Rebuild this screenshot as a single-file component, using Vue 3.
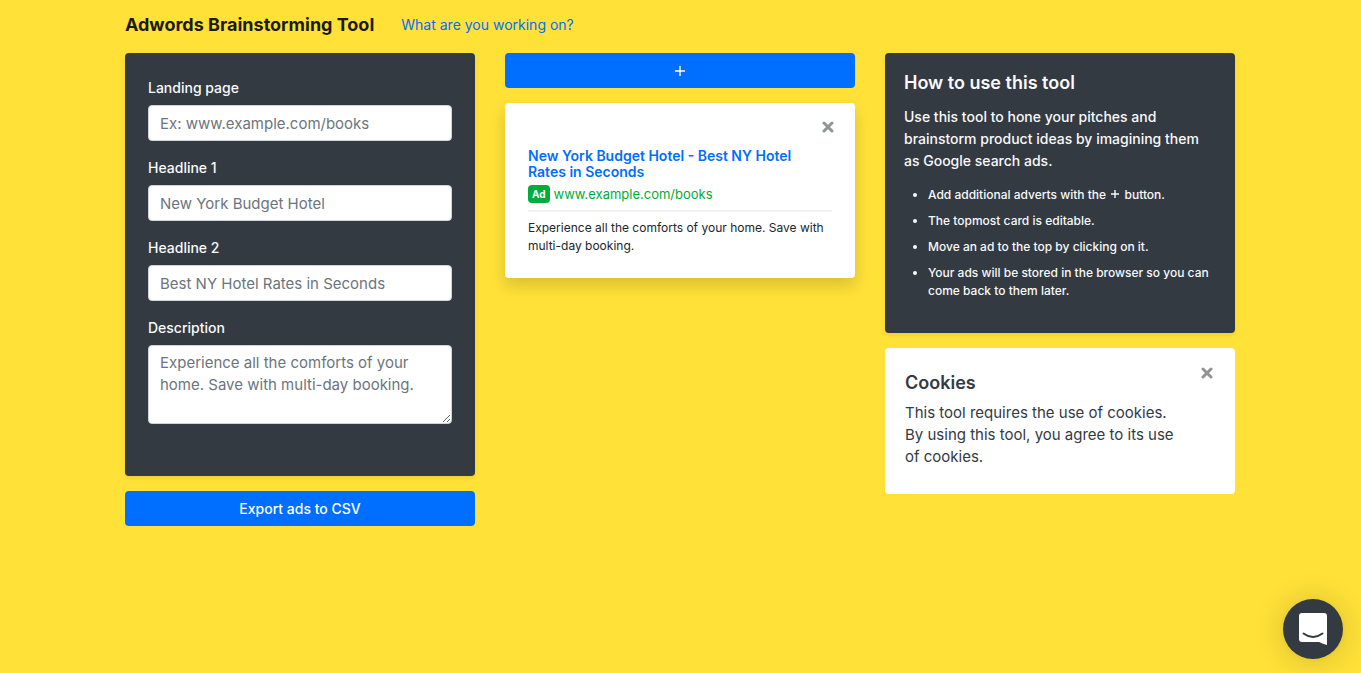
<script setup>
import { ref } from 'vue'

const fields = [
  { id: 'headline1', label: 'Headline 1', placeholder: 'New York Budget Hotel' },
  { id: 'headline2', label: 'Headline 2', placeholder: 'Best NY Hotel Rates in Seconds' },
]
const form = ref({ landing: '', headline1: '', headline2: '', description: '' })
const showCookies = ref(true)
</script>

<template>
  <div class="page">
    <header class="top">
      <h1>Adwords Brainstorming Tool</h1>
      <a href="#">What are you working on?</a>
    </header>

    <main class="columns">
      <section class="column">
        <form class="panel editor" @submit.prevent>
          <div class="field">
            <label for="landing">Landing page</label>
            <input id="landing" v-model="form.landing" type="text" placeholder="Ex: www.example.com/books" />
          </div>
          <div v-for="f in fields" :key="f.id" class="field">
            <label :for="f.id">{{ f.label }}</label>
            <input :id="f.id" v-model="form[f.id]" type="text" :placeholder="f.placeholder" />
          </div>
          <div class="field">
            <label for="description">Description</label>
            <textarea
              id="description"
              v-model="form.description"
              placeholder="Experience all the comforts of your home. Save with multi-day booking."
            ></textarea>
          </div>
        </form>
        <button type="button" class="primary">Export ads to CSV</button>
      </section>

      <section class="column">
        <button type="button" class="primary" aria-label="Add advert">
          <svg class="plus" viewBox="0 0 12 12" aria-hidden="true"><path d="M6 1v10M1 6h10" /></svg>
        </button>
        <article class="ad">
          <button type="button" class="close" aria-label="Remove advert">
            <svg viewBox="0 0 12 12" aria-hidden="true"><path d="M2 2l8 8M10 2l-8 8" /></svg>
          </button>
          <h2>New York Budget Hotel - Best NY Hotel Rates in Seconds</h2>
          <div class="url"><span class="badge">Ad</span><span>www.example.com/books</span></div>
          <p>Experience all the comforts of your home. Save with multi-day booking.</p>
        </article>
      </section>

      <aside class="column">
        <section class="panel help">
          <h2>How to use this tool</h2>
          <p>Use this tool to hone your pitches and brainstorm product ideas by imagining them as Google search ads.</p>
          <ul>
            <li>
              Add additional adverts with the
              <svg class="plus small" viewBox="0 0 12 12" role="img" aria-label="plus"><path d="M6 2v8M2 6h8" /></svg>
              button.
            </li>
            <li>The topmost card is editable.</li>
            <li>Move an ad to the top by clicking on it.</li>
            <li>Your ads will be stored in the browser so you can come back to them later.</li>
          </ul>
        </section>
        <section v-if="showCookies" class="cookies">
          <div>
            <h2>Cookies</h2>
            <p>This tool requires the use of cookies. By using this tool, you agree to its use of cookies.</p>
          </div>
          <button type="button" class="close" aria-label="Dismiss" @click="showCookies = false">
            <svg viewBox="0 0 12 12" aria-hidden="true"><path d="M2 2l8 8M10 2l-8 8" /></svg>
          </button>
        </section>
      </aside>
    </main>

    <button type="button" class="chat" aria-label="Open chat">
      <svg viewBox="0 0 28 32" aria-hidden="true">
        <path class="bubble" d="M3 0h22q3 0 3 3v29q-4-1-8-3H3q-3 0-3-3V3q0-3 3-3z" />
        <path class="smile" d="M4.500 20.500q9.500 7 19 0" />
      </svg>
    </button>
  </div>
</template>

<style>
body {
  margin: 0;
  background: #ffe138;
}
</style>

<style scoped>
* {
  box-sizing: border-box;
}
.page {
  max-width: 1141px;
  margin: 0 auto;
  padding: 0 16px 30px 15px;
  font-family: Inter, "Liberation Sans", sans-serif;
  font-size: 14px;
  line-height: 22px;
  color: #212529;
}
h1, h2, p, ul {
  margin: 0;
}
button, input, textarea {
  font: inherit;
}
.top {
  display: flex;
  align-items: center;
  gap: 27px;
  padding: 12px 0 15px;
}
h1 {
  font-size: 18px;
  line-height: 26px;
  font-weight: 700;
  color: #1c1a08;
}
.top a {
  color: #006eff;
  text-decoration: none;
}
.columns {
  display: grid;
  grid-template-columns: repeat(auto-fit, minmax(300px, 1fr));
  gap: 30px;
  align-items: start;
}
.column {
  display: flex;
  flex-direction: column;
  gap: 15px;
}
.panel {
  border-radius: 4px;
  background: #343a42;
  color: #f8f9fa;
  font-weight: 500;
  box-shadow: 0 2px 4px rgba(0, 0, 0, 0.08);
}
.editor {
  display: flex;
  flex-direction: column;
  gap: 16px;
  padding: 24px 23px 52px;
}
.field {
  display: flex;
  flex-direction: column;
  gap: 6px;
}
input, textarea {
  display: block;
  width: 100%;
  height: 36px;
  margin: 0;
  padding: 6px 11px;
  border: 1px solid #ced4da;
  border-radius: 4px;
  background: #fff;
  color: #495057;
  font-size: 15px;
  font-weight: 400;
}
textarea {
  height: 79px;
  resize: vertical;
}
input::placeholder, textarea::placeholder {
  color: #6c757d;
  opacity: 1;
}
.primary {
  display: flex;
  align-items: center;
  justify-content: center;
  width: 100%;
  height: 35px;
  padding: 0;
  border: 0;
  border-radius: 4px;
  background: #006eff;
  color: #fff;
  font-weight: 500;
  cursor: pointer;
}
.plus {
  width: 12px;
  height: 12px;
  fill: none;
  stroke: currentColor;
  stroke-width: 1.4;
}
.plus.small {
  vertical-align: -1px;
}
.ad {
  display: flex;
  flex-direction: column;
  padding: 16px 23px 23px;
  border-radius: 4px;
  background: #fff;
  box-shadow: 0 8px 16px rgba(0, 0, 0, 0.15);
}
.close {
  align-self: flex-end;
  display: flex;
  align-items: center;
  justify-content: center;
  width: 16px;
  height: 16px;
  padding: 0;
  margin-right: -4px;
  border: 0;
  background: none;
  color: #909497;
  cursor: pointer;
}
.close svg {
  width: 12px;
  height: 12px;
  fill: none;
  stroke: currentColor;
  stroke-width: 3;
  stroke-linecap: round;
}
.ad h2 {
  margin-top: 13px;
  font-size: 14px;
  line-height: 16px;
  font-weight: 600;
  color: #006eff;
}
.url {
  display: flex;
  align-items: center;
  gap: 4px;
  padding: 4px 0 6px;
  border-bottom: 2px solid #f1f1f1;
  color: #00ac3a;
  font-size: 13px;
  line-height: 20px;
}
.badge {
  padding: 0 4px;
  border-radius: 4px;
  background: #00ac3a;
  color: #fff;
  font-size: 10px;
  line-height: 18px;
  font-weight: 700;
}
.ad p {
  margin-top: 7px;
  font-size: 12px;
  line-height: 18px;
}
.help {
  padding: 19px 19px 33px;
}
.help h2, .cookies h2 {
  font-size: 18px;
  line-height: 22px;
  font-weight: 600;
}
.help p {
  margin-top: 12px;
}
.help ul {
  margin-top: 14px;
  padding-left: 24px;
  font-size: 12px;
  line-height: 18px;
}
.help li + li {
  margin-top: 8px;
}
.cookies {
  display: flex;
  justify-content: space-between;
  align-items: flex-start;
  gap: 15px;
  padding: 17px 24px 26px 20px;
  border-radius: 4px;
  background: #fff;
  color: #343a42;
}
.cookies h2 {
  margin-top: 7px;
}
.cookies p {
  margin-top: 8px;
  font-size: 15px;
}
.cookies .close {
  flex: none;
  align-self: flex-start;
}
.chat {
  position: fixed;
  right: 18px;
  bottom: 14px;
  display: flex;
  align-items: center;
  justify-content: center;
  width: 60px;
  height: 60px;
  padding: 0;
  border: 0;
  border-radius: 50%;
  background: #343a42;
  box-shadow: 0 1px 6px rgba(0, 0, 0, 0.06), 0 2px 32px rgba(0, 0, 0, 0.16);
  cursor: pointer;
}
.chat svg {
  width: 28px;
  height: 32px;
}
.bubble {
  fill: #fff;
}
.smile {
  fill: none;
  stroke: #343a42;
  stroke-width: 2;
  stroke-linecap: round;
}
</style>
